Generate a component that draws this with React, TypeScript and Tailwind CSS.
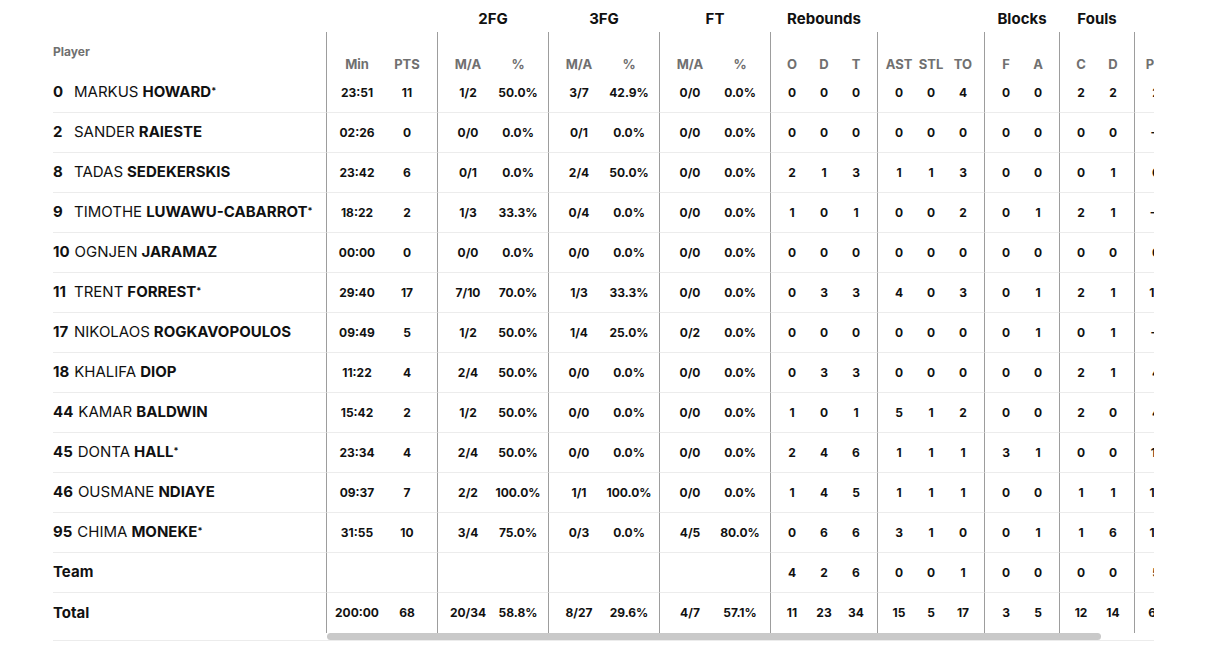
import React from 'react';

interface Group {
  label: string;
  cols: string[];
  cell: string;
}

interface Player {
  num: string;
  first: string;
  last: string;
  starter?: boolean;
  stats: string[];
}

const groups: Group[] = [
  { label: '', cols: ['Min', 'PTS'], cell: 'w-[50px]' },
  { label: '2FG', cols: ['M/A', '%'], cell: 'w-[50px]' },
  { label: '3FG', cols: ['M/A', '%'], cell: 'w-[50px]' },
  { label: 'FT', cols: ['M/A', '%'], cell: 'w-[50px]' },
  { label: 'Rebounds', cols: ['O', 'D', 'T'], cell: 'w-[32px]' },
  { label: '', cols: ['AST', 'STL', 'TO'], cell: 'w-[32px]' },
  { label: 'Blocks', cols: ['F', 'A'], cell: 'w-[32px]' },
  { label: 'Fouls', cols: ['C', 'D'], cell: 'w-[32px]' },
  { label: '', cols: ['PIR', '+/-'], cell: 'w-[32px]' },
];

// stats in column order: Min PTS | 2FG | 3FG | FT | O D T | AST STL TO | F A | C D | PIR +/-
const players: Player[] = [
  { num: '0', first: 'MARKUS', last: 'HOWARD', starter: true, stats: ['23:51', '11', '1/2', '50.0%', '3/7', '42.9%', '0/0', '0.0%', '0', '0', '0', '0', '0', '4', '0', '0', '2', '2', '2', '-9'] },
  { num: '2', first: 'SANDER', last: 'RAIESTE', stats: ['02:26', '0', '0/0', '0.0%', '0/1', '0.0%', '0/0', '0.0%', '0', '0', '0', '0', '0', '0', '0', '0', '0', '0', '-1', '-2'] },
  { num: '8', first: 'TADAS', last: 'SEDEKERSKIS', stats: ['23:42', '6', '0/1', '0.0%', '2/4', '50.0%', '0/0', '0.0%', '2', '1', '3', '1', '1', '3', '0', '0', '0', '1', '6', '+4'] },
  { num: '9', first: 'TIMOTHE', last: 'LUWAWU-CABARROT', starter: true, stats: ['18:22', '2', '1/3', '33.3%', '0/4', '0.0%', '0/0', '0.0%', '1', '0', '1', '0', '0', '2', '0', '1', '2', '1', '-7', '-11'] },
  { num: '10', first: 'OGNJEN', last: 'JARAMAZ', stats: ['00:00', '0', '0/0', '0.0%', '0/0', '0.0%', '0/0', '0.0%', '0', '0', '0', '0', '0', '0', '0', '0', '0', '0', '0', '0'] },
  { num: '11', first: 'TRENT', last: 'FORREST', starter: true, stats: ['29:40', '17', '7/10', '70.0%', '1/3', '33.3%', '0/0', '0.0%', '0', '3', '3', '4', '0', '3', '0', '1', '2', '1', '14', '+3'] },
  { num: '17', first: 'NIKOLAOS', last: 'ROGKAVOPOULOS', stats: ['09:49', '5', '1/2', '50.0%', '1/4', '25.0%', '0/2', '0.0%', '0', '0', '0', '0', '0', '0', '0', '1', '0', '1', '-1', '-5'] },
  { num: '18', first: 'KHALIFA', last: 'DIOP', stats: ['11:22', '4', '2/4', '50.0%', '0/0', '0.0%', '0/0', '0.0%', '0', '3', '3', '0', '0', '0', '0', '0', '2', '1', '4', '+1'] },
  { num: '44', first: 'KAMAR', last: 'BALDWIN', stats: ['15:42', '2', '1/2', '50.0%', '0/0', '0.0%', '0/0', '0.0%', '1', '0', '1', '5', '1', '2', '0', '0', '2', '0', '4', '-6'] },
  { num: '45', first: 'DONTA', last: 'HALL', starter: true, stats: ['23:34', '4', '2/4', '50.0%', '0/0', '0.0%', '0/0', '0.0%', '2', '4', '6', '1', '1', '1', '3', '1', '0', '0', '11', '+2'] },
  { num: '46', first: 'OUSMANE', last: 'NDIAYE', stats: ['09:37', '7', '2/2', '100.0%', '1/1', '100.0%', '0/0', '0.0%', '1', '4', '5', '1', '1', '1', '0', '0', '1', '1', '13', '+6'] },
  { num: '95', first: 'CHIMA', last: 'MONEKE', starter: true, stats: ['31:55', '10', '3/4', '75.0%', '0/3', '0.0%', '4/5', '80.0%', '0', '6', '6', '3', '1', '0', '0', '1', '1', '6', '19', '-2'] },
];

const teamStats = ['', '', '', '', '', '', '', '', '4', '2', '6', '0', '0', '1', '0', '0', '0', '0', '5', ''];
const totalStats = ['200:00', '68', '20/34', '58.8%', '8/27', '29.6%', '4/7', '57.1%', '11', '23', '34', '15', '5', '17', '3', '5', '12', '14', '69', ''];

const StatRow: React.FC<{ stats: string[]; last?: boolean }> = ({ stats, last }) => {
  let i = 0;
  return (
    <div className="flex h-[40px]">
      {groups.map((g, gi) => (
        <div
          key={gi}
          className={`flex items-center px-[5px] border-l border-l-[#9d9d9d] ${last ? '' : 'border-b border-b-[#ececec]'}`}
        >
          {g.cols.map(c => {
            const v = stats[i++];
            return (
              <div key={c} className={`${g.cell} text-center text-[12px] font-bold text-[#111] whitespace-nowrap`}>
                {v}
              </div>
            );
          })}
        </div>
      ))}
    </div>
  );
};

export default function App() {
  return (
    <div className="min-h-screen bg-white text-[#111]" style={{ fontFamily: 'Inter, "Noto Sans", sans-serif' }}>
      <div className="ml-[53px] w-[1101px] flex border-b border-[#ececec]">
        {/* Player column */}
        <div className="w-[273px] shrink-0">
          <div className="h-[32px]" />
          <div className="h-[41px] pt-[12px] leading-4 text-[12px] font-bold text-[#707070]">Player</div>
          {players.map(p => (
            <div key={p.num} className="h-[40px] flex items-center border-b border-[#ececec] text-[15px] whitespace-nowrap">
              <span className="inline-block min-w-[16px] mr-[5px] font-bold">{p.num}</span>
              <span>{p.first}</span>
              <span className="ml-[4px] font-bold">{p.last}</span>
              {p.starter && <span className="font-bold text-[9px] self-start mt-[11px]">*</span>}
            </div>
          ))}
          <div className="h-[40px] flex items-center border-b border-[#ececec] text-[15px] font-bold">Team</div>
          <div className="h-[40px] flex items-center text-[15px] font-bold">Total</div>
          <div className="h-[7px]" />
        </div>

        <div className="w-[828px] overflow-hidden">
          <div className="w-max">
            {/* group labels */}
            <div className="flex h-[32px]">
              {groups.map((g, gi) => (
                <div key={gi} className="relative flex px-[5px] border-l border-transparent">
                  {g.cols.map(c => <div key={c} className={g.cell} />)}
                  <div className="absolute inset-0 pt-[9px] text-center text-[15px] font-bold leading-5 text-[#111]">
                    {g.label}
                  </div>
                </div>
              ))}
            </div>
            {/* column labels */}
            <div className="flex h-[41px]">
              {groups.map((g, gi) => (
                <div key={gi} className="flex items-end pb-[1px] px-[5px] border-l border-[#9d9d9d]">
                  {g.cols.map(c => (
                    <div key={c} className={`${g.cell} text-center text-[13px] leading-4 font-bold text-[#707070] whitespace-nowrap`}>
                      {c}
                    </div>
                  ))}
                </div>
              ))}
            </div>
            {players.map(p => <StatRow key={p.num} stats={p.stats} />)}
            <StatRow stats={teamStats} />
            <StatRow stats={totalStats} last />
          </div>
          {/* scrollbar */}
          <div className="h-[7px] pl-[1px]">
            <div className="h-[7px] w-[774px] rounded-full bg-[#c9c9c9]" />
          </div>
        </div>
      </div>
    </div>
  );
}
